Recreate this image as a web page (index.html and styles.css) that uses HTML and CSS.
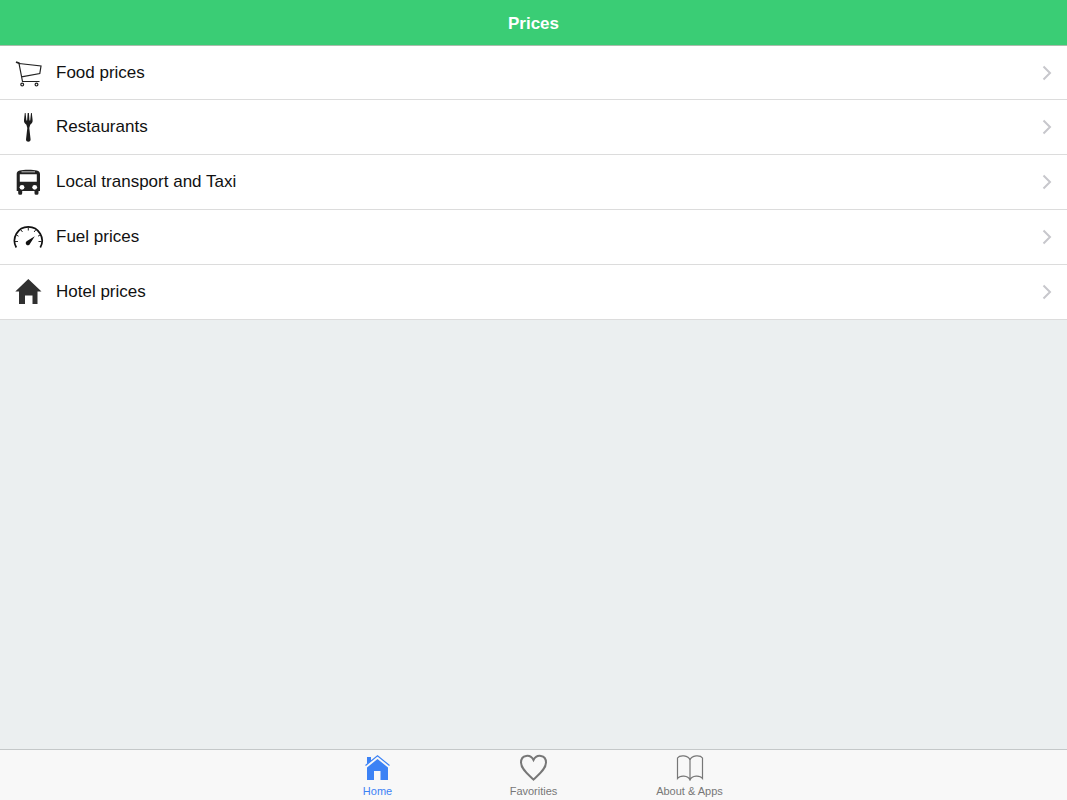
FILE: index.html
```html
<!DOCTYPE html>
<html lang="en">
<head>
    <meta charset="UTF-8">
    <meta name="viewport" content="width=device-width, initial-scale=1">
    <title>Prices</title>
    <link rel="stylesheet" href="styles.css">
</head>

<body>
    <header class="header">
        <h1>Prices</h1>
    </header>

    <main class="content">
        <ul class="list">
            <li>
                <a href="food.html">
                    <svg class="icon" viewBox="0 0 32 32" fill="none" stroke="#222" stroke-width="1.2">
                        <path d="M7 6.500 10.500 24.500H27.500M7 6.500 29 9 27.800 16.500 9.500 19.800"/>
                        <path d="M4 5 7.500 6.300" stroke-width="1.800"/>
                        <circle cx="10.2" cy="27.600" r="1.400"/>
                        <circle cx="24.500" cy="27.600" r="1.400"/>
                    </svg>
                    <span>Food prices</span>
                    <svg class="arrow" viewBox="0 0 10 16"><path d="M1.5 1.5 8 8 1.5 14.5"/></svg>
                </a>
            </li>
            <li>
                <a href="restaurants.html">
                    <svg class="icon" viewBox="0 0 32 32" fill="#1c1c1c">
                        <path d="M12.800 2h.8l.8 7.500h.7L15.700 2h1.200l.6 7.500h.7L19 2h.8L20.600 9c.3 2.500-.8 3.500-2.400 4.800L17.300 17 18.600 28.500c0 3-4.600 3-4.600 0L15.300 17 14.400 13.800C12.800 12.500 11.700 11.500 12 9z"/>
                    </svg>
                    <span>Restaurants</span>
                    <svg class="arrow" viewBox="0 0 10 16"><path d="M1.5 1.5 8 8 1.5 14.5"/></svg>
                </a>
            </li>
            <li>
                <a href="transport.html">
                    <svg class="icon" viewBox="0 0 32 32">
                        <path fill="#222" fill-rule="evenodd" d="M4.700 8C4.700 4.500 9 3.800 16.300 3.800S28 4.500 28 8V25H26.500v2.300q0 1.500-1.500 1.500h-1q-1.500 0-1.500-1.500V25H10.200v2.300q0 1.500-1.500 1.500h-1q-1.500 0-1.500-1.500V25H4.700zM9.500 5.500v.7h13.500v-.7zM7.800 8.300v7.500h17V8.300z"/>
                        <circle cx="10" cy="21.300" r="2.400" fill="#fff"/>
                        <circle cx="22.700" cy="21.300" r="2.400" fill="#fff"/>
                    </svg>
                    <span>Local transport and Taxi</span>
                    <svg class="arrow" viewBox="0 0 10 16"><path d="M1.5 1.5 8 8 1.5 14.5"/></svg>
                </a>
            </li>
            <li>
                <a href="fuel.html">
                    <svg class="icon" viewBox="0 0 32 32" fill="none" stroke="#111">
                        <path d="M4.300 26.500A13.800 13.800 0 1 1 28.300 26.500" stroke-width="1.700"/>
                        <path d="M3 20.500h3M29.500 20.500h-3M16.300 6.500v3M9 9l1.500 2M23.600 9l-1.500 2M4.500 14l2 1.200M28 14l-2 1.200" stroke-width=".9"/>
                        <path d="M22.800 15.300 18 22.800a2.200 2.200 0 1 1-3-2.700z" fill="#111" stroke="none"/>
                    </svg>
                    <span>Fuel prices</span>
                    <svg class="arrow" viewBox="0 0 10 16"><path d="M1.5 1.5 8 8 1.5 14.5"/></svg>
                </a>
            </li>
            <li>
                <a href="hotels.html">
                    <svg class="icon" viewBox="0 0 32 32" fill="#303030">
                        <path d="M16.300 3 29.500 15.500H25.500V28h-5v-8.500h-7.500V28H7V15.500H3.300z"/>
                    </svg>
                    <span>Hotel prices</span>
                    <svg class="arrow" viewBox="0 0 10 16"><path d="M1.5 1.5 8 8 1.5 14.5"/></svg>
                </a>
            </li>
        </ul>
    </main>

    <nav class="tabs">
        <a class="active" href="index.html">
            <svg viewBox="0 0 30 28" fill="#3c82f5">
                <path d="M4 4h4v4L4 11z"/>
                <path d="M14.500 6 25 14.500V27h-7.500v-9h-6.500v9H4V14.500z"/>
                <path d="M2.500 12.500 14.500 2.800l12 9.700" fill="none" stroke="#3c82f5" stroke-width="1.200"/>
            </svg>
            <span>Home</span>
        </a>
        <a href="favorites.html">
            <svg viewBox="0 0 30 28" fill="none" stroke="#777" stroke-width="2">
                <path d="M14.500 26.500C10 22 2 16.500 2 9.500 2 1.500 11.500.8 14.500 7 17.500.8 27 1.500 27 9.500 27 16.500 19 22 14.500 26.500z"/>
            </svg>
            <span>Favorities</span>
        </a>
        <a href="about.html">
            <svg viewBox="0 0 30 28" fill="none" stroke="#777" stroke-width="1.200">
                <path d="M15 7C13.500 1.800 4.500 1.800 2.500 5V25.500C5 22 13 22 15 27 17 22 25 22 27.500 25.500V5C25.500 1.800 16.500 1.800 15 7zM15 7V27"/>
            </svg>
            <span>About &amp; Apps</span>
        </a>
    </nav>
</body>
</html>
```

FILE: styles.css
```css
html, body {
    height: 100%;
    margin: 0;
    padding: 0;
}

body {
    display: flex;
    flex-direction: column;
    background-color: #ebeff0;
    color: #111111;
    font-family: "Liberation Sans", Helvetica, Arial, sans-serif;
}

a {
    color: inherit;
    text-decoration: none;
}

.header {
    height: 45px;
    background-color: #3acd75;
    border-bottom: 1px solid #a9bdac;
    display: flex;
    align-items: center;
    justify-content: center;
}

.header h1 {
    margin: 0;
    padding-top: 2px;
    color: #ffffff;
    font-size: 17px;
    line-height: 20px;
}

.content {
    flex: 1;
}

.list {
    list-style: none;
    margin: 0;
    padding: 0;
    background-color: #ffffff;
}

.list li {
    border-bottom: 1px solid #dcdcdc;
}

.list li:first-child a {
    height: 53px;
}

.list a {
    display: flex;
    align-items: center;
    height: 54px;
    padding: 0 15px 0 12px;
    font-size: 17px;
}

.list span {
    flex: 1;
}

.icon {
    width: 32px;
    height: 32px;
    margin-right: 12px;
}

.arrow {
    width: 10px;
    height: 16px;
    fill: none;
    stroke: #c7c7cc;
    stroke-width: 2;
}

.tabs {
    display: flex;
    justify-content: center;
    gap: 46px;
    height: 50px;
    background-color: #f8f8f8;
    border-top: 1px solid #c4c8c9;
}

.tabs a {
    width: 110px;
    display: flex;
    flex-direction: column;
    align-items: center;
    padding-top: 3px;
    box-sizing: border-box;
    color: #777777;
    font-size: 11px;
    line-height: 14px;
}

.tabs svg {
    width: 30px;
    height: 28px;
    margin-bottom: 3px;
}

.tabs .active {
    color: #3c82f5;
}
```
